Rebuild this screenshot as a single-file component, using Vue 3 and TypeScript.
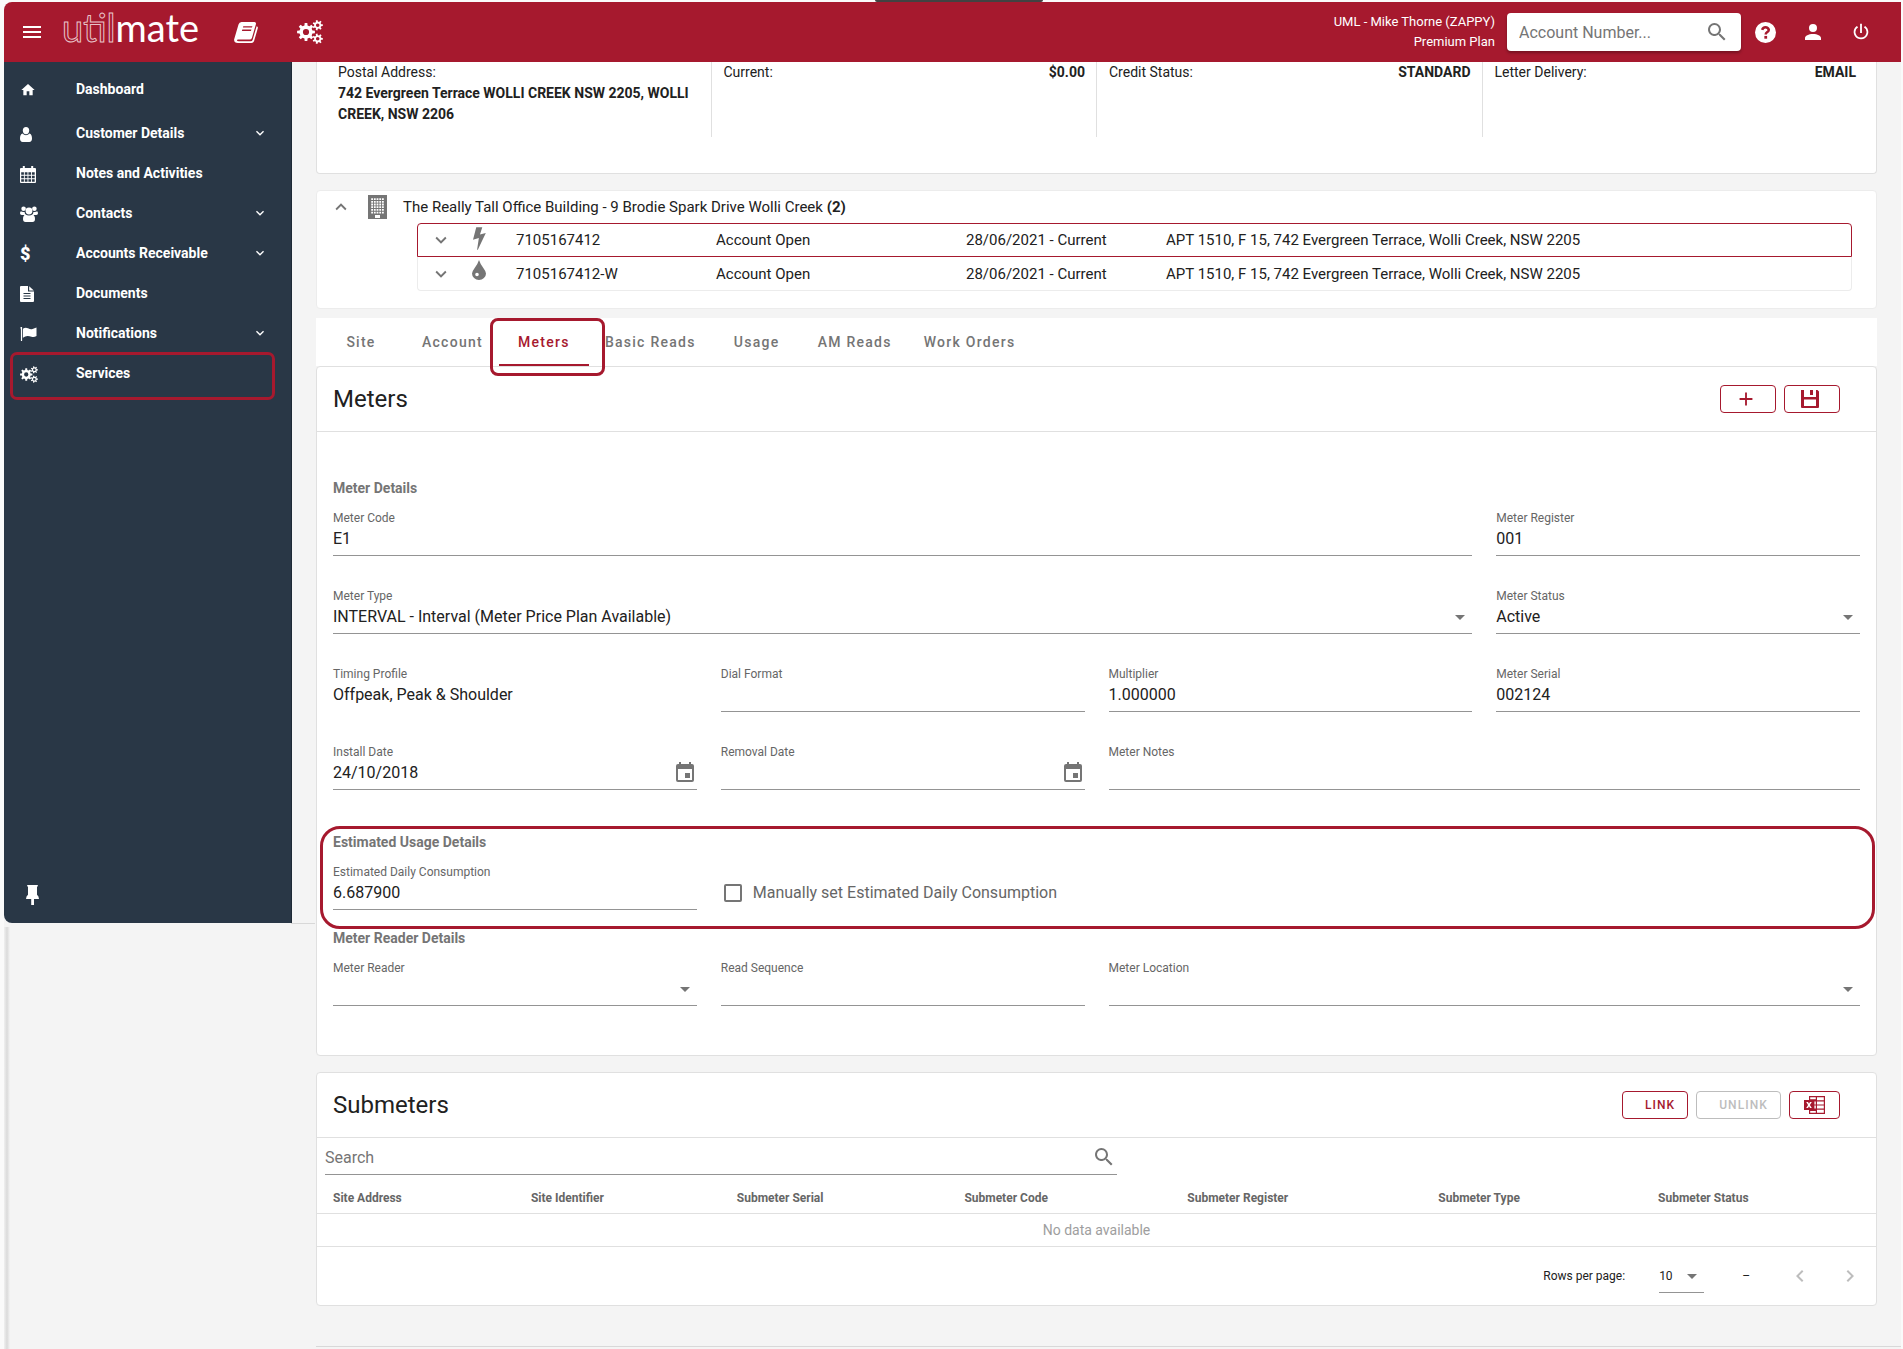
<script setup lang="ts">
import { h, ref } from 'vue'

interface IconShape {
  box: [number, number]
  paths: string[]
}

const circle = (cx: number, cy: number, r: number): string =>
  `M${cx - r} ${cy}a${r} ${r} 0 1 0 ${2 * r} 0a${r} ${r} 0 1 0 ${-2 * r} 0z`

function gear(cx: number, cy: number, outer: number, inner: number, hole: number, teeth: number): string {
  const step = (Math.PI * 2) / teeth
  const points: string[] = []
  for (let i = 0; i < teeth; i++) {
    const a = i * step
    const corners: [number, number][] = [
      [a - step * 0.3, inner],
      [a - step * 0.19, outer],
      [a + step * 0.19, outer],
      [a + step * 0.3, inner],
    ]
    for (const [angle, r] of corners) {
      points.push(`${(cx + Math.cos(angle) * r).toFixed(2)} ${(cy + Math.sin(angle) * r).toFixed(2)}`)
    }
  }
  return `M${points.join('L')}Z${circle(cx, cy, hole)}`
}

function cells(x: number, y: number, cols: number, rows: number, dx: number, dy: number, w: number, hgt: number): string {
  let d = ''
  for (let r = 0; r < rows; r++) {
    for (let c = 0; c < cols; c++) d += `M${x + c * dx} ${y + r * dy}h${w}v${hgt}h${-w}z`
  }
  return d
}

const icons: Record<string, IconShape> = {
  menu: { box: [24, 24], paths: ['M3 6h18v2H3zM3 11h18v2H3zM3 16h18v2H3z'] },
  down: { box: [24, 24], paths: ['M7.41 8.58L12 13.17l4.59-4.59L18 10l-6 6-6-6z'] },
  up: { box: [24, 24], paths: ['M7.41 15.41L12 10.83l4.59 4.58L18 14l-6-6-6 6z'] },
  left: { box: [24, 24], paths: ['M15.41 16.58L10.83 12l4.58-4.59L14 6l-6 6 6 6z'] },
  right: { box: [24, 24], paths: ['M8.59 16.58L13.17 12 8.59 7.41 10 6l6 6-6 6z'] },
  caret: { box: [24, 24], paths: ['M7 10l5 5 5-5z'] },
  plus: { box: [24, 24], paths: ['M19 13h-6v6h-2v-6H5v-2h6V5h2v6h6z'] },
  search: {
    box: [24, 24],
    paths: [
      'M9.5 3A6.5 6.5 0 0 1 16 9.5c0 1.61-.59 3.09-1.56 4.23l.27.27h.79l5 5-1.5 1.5-5-5v-.79l-.27-.27A6.5 6.5 0 1 1 9.5 3m0 2C7 5 5 7 5 9.5S7 14 9.5 14 14 12 14 9.5 12 5 9.5 5z',
    ],
  },
  account: {
    box: [24, 24],
    paths: ['M12 4a4 4 0 1 1 0 8 4 4 0 0 1 0-8m0 10c4.42 0 8 1.79 8 4v2H4v-2c0-2.21 3.58-4 8-4z'],
  },
  power: {
    box: [24, 24],
    paths: [
      'M16.56 5.44l-1.45 1.45A6 6 0 0 1 12 18 6 6 0 0 1 8.88 6.88L7.44 5.44A8 8 0 1 0 20 12c0-2.72-1.36-5.12-3.44-6.56M13 3h-2v10h2z',
    ],
  },
  date: {
    box: [24, 24],
    paths: [
      'M19 19H5V8h14M16 1v2H8V1H6v2H5a2 2 0 0 0-2 2v14a2 2 0 0 0 2 2h14a2 2 0 0 0 2-2V5a2 2 0 0 0-2-2h-1V1M17 12h-5v5h5z',
    ],
  },
  home: { box: [24, 24], paths: ['M10 20v-6h4v6h5v-8h3L12 3 2 12h3v8z'] },
  user: {
    box: [12, 15],
    paths: [
      'M6 0a3.2 3.6 0 1 1 0 7.2A3.2 3.6 0 1 1 6 0z',
      'M2.7 6.6C3.6 7.7 4.7 8.2 6 8.2s2.4-.5 3.3-1.6c2 .3 2.7 2.5 2.7 5 0 2-1 3.4-2.7 3.4H2.7C1 15 0 13.6 0 11.6c0-2.5.7-4.7 2.7-5z',
    ],
  },
  calendar: {
    box: [16, 17],
    paths: [
      'M0 3q0-1 1-1h14q1 0 1 1v13q0 1-1 1H1q-1 0-1-1z' + cells(1.2, 6.2, 4, 3, 3.6, 3.5, 2.7, 2.6),
      'M2.8 0h2v4h-2zM11.2 0h2v4h-2z',
    ],
  },
  users: {
    box: [18, 16],
    paths: [
      circle(3.6, 2.8, 2.3),
      circle(14.4, 2.8, 2.3),
      circle(9, 5, 3.4),
      'M.8 5.2q1.4 1 3.8.7.1 1.8 1.3 3H2Q0 9 0 7.3 0 6 .8 5.2z',
      'M17.2 5.2q-1.4 1-3.8.7-.1 1.8-1.3 3H16q2 .1 2-1.6 0-1.3-.8-2.1z',
      'M5.6 8.5Q7 9.6 9 9.6t3.4-1.1q2.6.6 2.6 4.5 0 3-2.5 3h-7Q3 16 3 13q0-3.9 2.6-4.5z',
    ],
  },
  file: {
    box: [14, 16],
    paths: [
      'M1 0h7v5.5h6V15q0 1-1 1H1q-1 0-1-1V1q0-1 1-1zM3.5 7v1h7V7zM3.5 9.5v1h7v-1zM3.5 12v1h7v-1z',
      'M9.2.2l4.6 4.3H9.2z',
    ],
  },
  flag: {
    box: [16, 14],
    paths: ['M0 0h1.6v14H.4V2.4Q0 2 0 0z', 'M2.4 1.8Q5 0 7.5 1.3T12 2q2-.7 4-1.5v8.5q-2.5 1.7-5 .8T7 9q-2.2 0-4.6 1.7z'],
  },
  cogs: {
    box: [26, 24],
    paths: [gear(9, 12, 9, 6.6, 3.1, 8), gear(20.7, 5.2, 5.2, 3.6, 1.8, 7), gear(20.7, 18.8, 5.2, 3.6, 1.8, 7)],
  },
  book: {
    box: [24, 21],
    paths: [
      'M7.5 0H20.5Q22.4.2 21.9 2.2L17.9 16Q17.3 17.5 15.7 17.5H4.2Q2.9 17.5 2.9 18.3 3.1 19.3 4.8 19.3H16.7Q18.2 19.3 18.7 17.8L22.6 4.2Q24.2 4.6 23.8 6.2L20 19.2Q19.3 21 17.5 21H4Q0 20.8.1 17.5L4.5 2.6Q5.2.2 7.5 0zM9.3 4.2L8.9 5.6H18L18.4 4.2zM8.3 7.6L7.9 9H17L17.4 7.6z',
    ],
  },
  pin: { box: [13, 20], paths: ['M1.2 0h10.6v1.6H11v8.2q1.9 1.4 2 4.2H8v6H5.2v-6H0q.1-2.8 2-4.2V1.6h-.8z'] },
  building: {
    box: [19, 24],
    paths: ['M0 0h19v24H0z' + cells(3.2, 3.2, 5, 6, 2.7, 2.7, 1.8, 1.8) + 'M7 20h5v3H7z'],
  },
  bolt: { box: [14, 24], paths: ['M3.5 0h6.5L7.5 7.8 13.8 6 5.2 24H4.4L6.3 11.5 0 13.3z'] },
  drop: {
    box: [14, 20],
    paths: ['M7 0Q8 3.5 11.5 8.2 14 11.5 14 13.5A7 6.5 0 0 1 0 13.5Q0 11.5 2.5 8.2 6 3.5 7 0z' + circle(5, 14.5, 1.8)],
  },
  save: {
    box: [18, 18],
    paths: ['M0 0h3v7h12V0h1.5L18 1.5V17q0 1-1 1H1q-1 0-1-1zM3 9.5V16h12V9.5z', 'M9 0h3v5H9z'],
  },
  sheet: {
    box: [21, 18],
    paths: [
      'M5 0h16v18H5v-4h5V4H5z' +
        cells(13, 1.2, 1, 4, 0, 4.2, 6.8, 3) +
        cells(10.4, 5.4, 1, 2, 0, 4.2, 1.4, 3) +
        'M6.2 1.2h5.6v2H6.2zM6.2 15h5.6v1.8H6.2z',
      'M0 4h10v10H0zM2.2 6l1.9 3-1.9 3H4l1-1.8L6 12h1.8L5.9 9l1.9-3H6L5 7.8 4 6z',
    ],
  },
}

const Icon = (props: { name: string }) => {
  const icon = icons[props.name]
  return h(
    'svg',
    { viewBox: `0 0 ${icon.box[0]} ${icon.box[1]}`, fill: 'currentColor', 'aria-hidden': 'true' },
    icon.paths.map((d) => h('path', { d, 'fill-rule': 'evenodd' })),
  )
}
Icon.props = ['name']

const menu = [
  { label: 'Dashboard', icon: 'home', more: false },
  { label: 'Customer Details', icon: 'user', more: true },
  { label: 'Notes and Activities', icon: 'calendar', more: false },
  { label: 'Contacts', icon: 'users', more: true },
  { label: 'Accounts Receivable', icon: '', more: true },
  { label: 'Documents', icon: 'file', more: false },
  { label: 'Notifications', icon: 'flag', more: true },
  { label: 'Services', icon: 'cogs', more: false },
]

const services = [
  { icon: 'bolt', id: '7105167412' },
  { icon: 'drop', id: '7105167412-W' },
]

const tabs = ['Site', 'Account', 'Meters', 'Basic Reads', 'Usage', 'AM Reads', 'Work Orders']
const activeTab = ref('Meters')

type Kind = 'text' | 'select' | 'date' | 'plain'
interface Field {
  id: string
  label: string
  value: string
  kind: Kind
  span: number
}
const field = (id: string, label: string, value = '', kind: Kind = 'text', span = 1): Field => ({
  id,
  label,
  value,
  kind,
  span,
})

const sections = ref([
  {
    key: 'details',
    title: 'Meter Details',
    fields: [
      field('code', 'Meter Code', 'E1', 'text', 3),
      field('register', 'Meter Register', '001'),
      field('type', 'Meter Type', 'INTERVAL - Interval (Meter Price Plan Available)', 'select', 3),
      field('status', 'Meter Status', 'Active', 'select'),
      field('profile', 'Timing Profile', 'Offpeak, Peak & Shoulder', 'plain'),
      field('dial', 'Dial Format'),
      field('multiplier', 'Multiplier', '1.000000'),
      field('serial', 'Meter Serial', '002124'),
      field('install', 'Install Date', '24/10/2018', 'date'),
      field('removal', 'Removal Date', '', 'date'),
      field('notes', 'Meter Notes', '', 'text', 2),
    ],
  },
  {
    key: 'usage',
    title: 'Estimated Usage Details',
    fields: [field('daily', 'Estimated Daily Consumption', '6.687900')],
  },
  {
    key: 'reader',
    title: 'Meter Reader Details',
    fields: [
      field('reader', 'Meter Reader', '', 'select'),
      field('sequence', 'Read Sequence'),
      field('location', 'Meter Location', '', 'select', 2),
    ],
  },
])
const manual = ref(false)

const columns = [
  { label: 'Site Address', width: 12.7 },
  { label: 'Site Identifier', width: 13.2 },
  { label: 'Submeter Serial', width: 14.6 },
  { label: 'Submeter Code', width: 14.3 },
  { label: 'Submeter Register', width: 16.1 },
  { label: 'Submeter Type', width: 14.1 },
  { label: 'Submeter Status', width: 15 },
]
</script>

<template>
  <div class="page">
    <header class="topbar">
      <button class="icon-btn" type="button" aria-label="Menu"><Icon name="menu" class="i24" /></button>
      <a class="logo" href="#"><span class="logo-outline">util</span>mate</a>
      <nav class="quick" aria-label="Shortcuts">
        <a class="icon-btn" href="#" aria-label="Guide"><Icon name="book" class="i-book" /></a>
        <a class="icon-btn" href="#" aria-label="Settings"><Icon name="cogs" class="i-cogs" /></a>
      </nav>
      <p class="who">UML - Mike Thorne (ZAPPY)<br />Premium Plan</p>
      <label class="find">
        <input type="text" placeholder="Account Number..." aria-label="Account Number" />
        <Icon name="search" class="i24" />
      </label>
      <button class="icon-btn" type="button" aria-label="Help">
        <svg class="i-help" viewBox="0 0 22 22" aria-hidden="true">
          <circle cx="11" cy="11" r="11" fill="#fff" />
          <path
            d="M7.5 8.2Q8.2 5.5 11 5.5T14.5 8.2Q14.5 9.7 12.5 10.8 11.2 11.6 11.2 13.2"
            fill="none"
            stroke="#a6192e"
            stroke-width="2.6"
          />
          <path d="M9.8 14.6h2.9v2.900H9.8z" fill="#a6192e" />
        </svg>
      </button>
      <button class="icon-btn" type="button" aria-label="Profile"><Icon name="account" class="i24" /></button>
      <button class="icon-btn" type="button" aria-label="Log out"><Icon name="power" class="i22" /></button>
    </header>

    <div class="body">
      <div class="side-col">
        <aside class="sidebar">
          <nav class="menu" aria-label="Main">
            <a v-for="item in menu" :key="item.label" class="menu-item" :class="{ marked: item.label === 'Services' }" href="#">
              <span class="menu-icon">
                <Icon v-if="item.icon" :name="item.icon" :class="'m-' + item.icon" />
                <b v-else class="dollar">$</b>
              </span>
              <span class="menu-label">{{ item.label }}</span>
              <Icon v-if="item.more" name="down" class="i16" />
            </a>
          </nav>
          <button class="pin" type="button" aria-label="Pin menu"><Icon name="pin" class="i-pin" /></button>
        </aside>
        <div class="rail"></div>
      </div>

      <main class="content">
        <section class="card summary">
          <div class="sum-col stack">
            <span>Postal Address:</span>
            <b>742 Evergreen Terrace WOLLI CREEK NSW 2205, WOLLI CREEK, NSW 2206</b>
          </div>
          <div class="sum-col"><span>Current:</span><b>$0.00</b></div>
          <div class="sum-col"><span>Credit Status:</span><b>STANDARD</b></div>
          <div class="sum-col"><span>Letter Delivery:</span><b>EMAIL</b></div>
        </section>

        <section class="card sites">
          <div class="site-head">
            <button class="row-toggle" type="button" aria-label="Collapse site"><Icon name="up" class="i22" /></button>
            <Icon name="building" class="i-building" />
            <span>The Really Tall Office Building - 9 Brodie Spark Drive Wolli Creek <b>(2)</b></span>
          </div>
          <div v-for="(s, i) in services" :key="s.id" class="service" :class="{ current: i === 0 }">
            <button class="row-toggle" type="button" aria-label="Expand service"><Icon name="down" class="i22" /></button>
            <span class="service-icon"><Icon :name="s.icon" :class="'s-' + s.icon" /></span>
            <span>{{ s.id }}</span>
            <span>Account Open</span>
            <span>28/06/2021 - Current</span>
            <span>APT 1510, F 15, 742 Evergreen Terrace, Wolli Creek, NSW 2205</span>
          </div>
        </section>

        <div class="tabs" role="tablist">
          <button
            v-for="t in tabs"
            :key="t"
            class="tab"
            :class="{ active: t === activeTab }"
            type="button"
            role="tab"
            :aria-selected="t === activeTab"
            @click="activeTab = t"
          >
            {{ t }}
          </button>
        </div>

        <section class="card meters">
          <header class="card-head">
            <h2>Meters</h2>
            <button class="btn square" type="button" aria-label="Add meter"><Icon name="plus" class="i22" /></button>
            <button class="btn square" type="button" aria-label="Save"><Icon name="save" class="i18" /></button>
          </header>
          <form class="form" @submit.prevent>
            <fieldset v-for="s in sections" :key="s.key" :class="s.key">
              <legend>{{ s.title }}</legend>
              <div class="grid">
                <div v-for="f in s.fields" :key="f.id" class="field" :class="[f.kind, 'span' + f.span]">
                  <label :for="f.id">{{ f.label }}</label>
                  <div class="control">
                    <select v-if="f.kind === 'select'" :id="f.id" v-model="f.value">
                      <option :value="f.value">{{ f.value }}</option>
                    </select>
                    <input v-else :id="f.id" v-model="f.value" type="text" :readonly="f.kind === 'plain'" />
                    <Icon v-if="f.kind === 'select'" name="caret" class="i24 caret" />
                    <button v-if="f.kind === 'date'" class="pick" type="button" :aria-label="'Pick ' + f.label">
                      <Icon name="date" class="i24" />
                    </button>
                  </div>
                </div>
                <label v-if="s.key === 'usage'" class="check">
                  <input v-model="manual" type="checkbox" />
                  Manually set Estimated Daily Consumption
                </label>
              </div>
            </fieldset>
          </form>
        </section>

        <section class="card submeters">
          <header class="card-head">
            <h2>Submeters</h2>
            <button class="btn text" type="button">LINK</button>
            <button class="btn text" type="button" disabled>UNLINK</button>
            <button class="btn sheet" type="button" aria-label="Export"><Icon name="sheet" class="i-sheet" /></button>
          </header>
          <label class="table-search">
            <input type="text" placeholder="Search" aria-label="Search submeters" />
            <Icon name="search" class="i24" />
          </label>
          <table>
            <thead>
              <tr>
                <th v-for="c in columns" :key="c.label" :style="{ width: c.width + '%' }">{{ c.label }}</th>
              </tr>
            </thead>
            <tbody>
              <tr>
                <td :colspan="columns.length">No data available</td>
              </tr>
            </tbody>
          </table>
          <footer class="pager">
            <label for="rows">Rows per page:</label>
            <div class="control rows">
              <select id="rows">
                <option>10</option>
              </select>
              <Icon name="caret" class="i24 caret" />
            </div>
            <span class="range">–</span>
            <button type="button" disabled aria-label="Previous page"><Icon name="left" class="i24" /></button>
            <button type="button" disabled aria-label="Next page"><Icon name="right" class="i24" /></button>
          </footer>
        </section>
        <div class="page-end"></div>
      </main>
    </div>
  </div>
</template>

<style>
body {
  margin: 0;
  background: #fafafa;
}
</style>

<style scoped>
.page {
  position: relative;
  padding: 2px 2px 0 4px;
  font-family: Roboto, 'Liberation Sans', sans-serif;
  font-size: 14px;
  color: #212121;
}
.page::before {
  content: '';
  position: absolute;
  top: 0;
  left: 46%;
  width: 168px;
  height: 2px;
  background: #424242;
  border-radius: 0 0 4px 4px;
}
.page *,
.page *::before,
.page *::after {
  box-sizing: border-box;
}
button,
input,
select {
  font: inherit;
  color: inherit;
  background: none;
  border: 0;
  padding: 0;
  margin: 0;
  outline: 0;
  border-radius: 0;
}
svg {
  display: block;
  flex: none;
}
a {
  color: inherit;
  text-decoration: none;
}
.i16 { width: 16px; height: 16px; }
.i18 { width: 18px; height: 18px; }
.i22 { width: 22px; height: 22px; }
.i24 { width: 24px; height: 24px; }
.i-book { width: 24px; height: 21px; }
.i-cogs { width: 26px; height: 24px; }
.i-help { width: 21px; height: 21px; }
.i-pin { width: 13px; height: 20px; }
.i-building { width: 19px; height: 24px; color: #757575; }
.i-sheet { width: 21px; height: 18px; }

.topbar {
  display: flex;
  align-items: center;
  height: 60px;
  padding: 0 16px 0 4px;
  background: #a6192e;
  color: #fff;
  border-top-left-radius: 8px;
}
.icon-btn {
  display: flex;
  align-items: center;
  justify-content: center;
  width: 48px;
  height: 48px;
  flex: none;
}
.logo {
  width: 136px;
  margin-left: 6px;
  padding-bottom: 10px;
  font: 400 38px/44px Lato, sans-serif;
  white-space: nowrap;
}
.logo-outline {
  color: #a6192e;
  -webkit-text-stroke: 1px #e9c3c9;
}
.quick {
  display: flex;
  gap: 16px;
  margin-left: 24px;
}
.who {
  margin: 0 12px 0 auto;
  font-size: 13px;
  line-height: 20px;
  text-align: right;
}
.find {
  display: flex;
  align-items: center;
  width: 234px;
  height: 38px;
  padding: 0 12px;
  background: #fff;
  color: #757575;
  border-radius: 4px;
  box-shadow: 0 2px 3px rgba(0, 0, 0, 0.3);
  font-size: 16px;
}
.find input {
  flex: 1;
  min-width: 0;
}
input::placeholder {
  color: #757575;
  opacity: 1;
}

.body {
  display: flex;
  background: #f4f4f4;
}
.side-col {
  display: flex;
  flex-direction: column;
  flex: none;
  width: 288px;
}
.sidebar {
  position: relative;
  display: flex;
  flex-direction: column;
  justify-content: space-between;
  min-height: 861px;
  background: #293746;
  color: #fff;
  border-right: 1px solid #1d2935;
  border-bottom-left-radius: 8px;
}
.sidebar::after {
  content: '';
  position: absolute;
  left: 100%;
  bottom: -1px;
  width: 24px;
  border-bottom: 1px solid #d8d8d8;
}
.menu {
  padding-top: 7px;
}
.menu-item {
  position: relative;
  display: flex;
  align-items: center;
  height: 40px;
  padding: 0 23px 0 16px;
  font-weight: 700;
}
.menu-item:first-child {
  margin-bottom: 4px;
}
.menu-icon {
  width: 56px;
  padding-top: 2px;
}
.menu-label {
  flex: 1;
}
.marked::after {
  content: '';
  position: absolute;
  inset: -1px 16px -7px 6px;
  border: 3px solid #a6192e;
  border-radius: 7px;
}
.dollar {
  font-size: 18px;
  line-height: 20px;
}
.m-home { width: 16px; height: 16px; }
.m-user { width: 12px; height: 15px; }
.m-calendar { width: 16px; height: 17px; }
.m-users { width: 18px; height: 16px; }
.m-file { width: 14px; height: 16px; }
.m-flag { width: 17px; height: 14px; }
.m-cogs { width: 18px; height: 17px; }
.pin {
  align-self: flex-start;
  margin: 0 0 18px 22px;
}
.rail {
  flex: 1;
  margin-top: 4px;
  background: linear-gradient(90deg, #f0f0f0, #dadada 3px, #f4f4f4 6px);
}

.content {
  flex: 1;
  min-width: 0;
  padding-left: 24px;
}
.card {
  margin-right: 24px;
  background: #fff;
  border: 1px solid #e0e0e0;
  border-radius: 4px;
}
.summary {
  display: flex;
  height: 112px;
  padding: 0 9px 36px;
  border-top: 0;
  border-radius: 0 0 4px 4px;
  line-height: 21px;
}
.sum-col {
  display: flex;
  justify-content: space-between;
  flex: 1;
  padding: 0 11px 0 12px;
  border-right: 1px solid #e0e0e0;
}
.sum-col:last-child {
  border-right: 0;
}
.stack {
  flex-direction: column;
  justify-content: flex-start;
}
.sites {
  margin-top: 16px;
  padding-bottom: 17px;
  border-color: #ececec;
  font-size: 15px;
}
.site-head {
  display: flex;
  align-items: center;
  height: 32px;
}
.site-head .i-building {
  margin: 0 16px 0 3px;
}
.row-toggle {
  display: flex;
  justify-content: center;
  width: 48px;
  color: #757575;
}
.service {
  display: grid;
  grid-template-columns: 46px 52px 200px 250px 200px 1fr;
  align-items: center;
  height: 34px;
  margin: 0 24px 0 100px;
  border: 1px solid #ececec;
  border-top: 0;
  border-radius: 0 0 4px 4px;
}
.service .row-toggle {
  width: 46px;
}
.service.current {
  border: 1px solid #a6192e;
  border-radius: 4px 4px 0 0;
}
.service-icon {
  display: flex;
  justify-content: center;
  align-self: start;
  width: 30px;
  padding-top: 3px;
  color: #757575;
}
.s-bolt { width: 13px; height: 23px; }
.s-drop { width: 14px; height: 20px; }

.tabs {
  display: flex;
  height: 48px;
  margin: 9px 24px 0 0;
  background: #fff;
}
.tab {
  position: relative;
  min-width: 90px;
  padding: 0 16px;
  font-weight: 500;
  letter-spacing: 0.09em;
  color: #757575;
}
.tab.active {
  color: #a6192e;
}
.tab.active::before {
  content: '';
  position: absolute;
  inset: auto 0 0;
  height: 2px;
  background: #a6192e;
}
.tab.active::after {
  content: '';
  position: absolute;
  inset: 0 -16px -10px -9px;
  border: 3px solid #a6192e;
  border-radius: 8px;
}

.card-head {
  display: flex;
  align-items: center;
  gap: 8px;
  height: 65px;
  padding: 0 36px 0 16px;
  border-bottom: 1px solid #e0e0e0;
}
h2 {
  flex: 1;
  margin: 0;
  font-size: 24px;
  line-height: 32px;
  font-weight: 400;
}
.btn {
  display: flex;
  align-items: center;
  height: 28px;
  border: 1px solid #a6192e;
  border-radius: 4px;
  color: #a6192e;
  font-size: 12px;
  font-weight: 500;
  letter-spacing: 0.09em;
}
.btn.square {
  justify-content: center;
  width: 56px;
  padding-right: 5px;
}
.btn.text {
  padding: 0 12px 0 22px;
}
.btn.sheet {
  padding: 0 14px;
}
.btn:disabled {
  border-color: #bdbdbd;
  color: #bdbdbd;
}

.form {
  padding: 46px 16px 49px;
}
fieldset {
  position: relative;
  min-width: 0;
  margin: 0;
  padding: 0;
  border: 0;
}
fieldset.usage {
  margin: 42px 0 18px;
}
fieldset.usage::after {
  content: '';
  position: absolute;
  inset: -38px -15px -19px -13px;
  border: 3px solid #a6192e;
  border-radius: 20px;
  pointer-events: none;
}
legend {
  padding: 0 0 12px;
  font-weight: 700;
  line-height: 20px;
  color: #757575;
}
.grid {
  display: grid;
  grid-template-columns: repeat(4, minmax(0, 1fr));
  gap: 32px 24px;
}
.span2 { grid-column: span 2; }
.span3 { grid-column: span 3; }
.field label {
  display: block;
  font-size: 12px;
  line-height: 16px;
  color: #666;
}
.control {
  position: relative;
  display: flex;
  height: 30px;
  padding-top: 1px;
  border-bottom: 1px solid #949494;
}
.plain .control {
  border-bottom-color: transparent;
}
.control input,
.control select {
  flex: 1;
  min-width: 0;
  height: 24px;
  font-size: 16px;
  line-height: 24px;
  appearance: none;
}
.caret {
  position: absolute;
  right: 0;
  top: 1px;
  color: #757575;
  pointer-events: none;
}
.pick {
  align-self: flex-start;
  color: #757575;
}
.check {
  grid-column: span 2;
  display: flex;
  align-items: center;
  align-self: start;
  gap: 11px;
  padding: 17px 0 0 3px;
  font-size: 16px;
  line-height: 24px;
  color: #666;
}
.check input {
  width: 18px;
  height: 18px;
  appearance: none;
  border: 2px solid #757575;
  border-radius: 2px;
}
.check input:checked {
  background: #a6192e;
}

.submeters {
  margin-top: 16px;
}
.table-search {
  display: flex;
  align-items: center;
  width: calc(50% + 12px);
  height: 37px;
  margin-left: 8px;
  padding: 2px 1px 0 0;
  border-bottom: 1px solid #949494;
  color: #757575;
  font-size: 16px;
}
.table-search input {
  flex: 1;
  min-width: 0;
}
table {
  width: 100%;
  border-collapse: collapse;
  table-layout: fixed;
}
th {
  padding: 14px 16px 6px;
  border-bottom: 1px solid #e0e0e0;
  font-size: 12px;
  line-height: 18px;
  font-weight: 700;
  text-align: left;
  color: #666;
}
td {
  height: 33px;
  padding: 0;
  border-bottom: 1px solid #e0e0e0;
  text-align: center;
  color: #9e9e9e;
}
.pager {
  display: flex;
  align-items: center;
  justify-content: flex-end;
  height: 58px;
  padding-right: 8px;
  font-size: 12px;
}
.pager .rows {
  width: 45px;
  height: 33px;
  margin: 0 38px 0 34px;
  align-items: center;
  padding: 0;
}
.pager select {
  font-size: 12px;
}
.pager .caret {
  top: 4px;
}
.range {
  margin-right: 32px;
}
.pager button {
  display: flex;
  justify-content: center;
  width: 36px;
  color: #bdbdbd;
}
.pager button + button {
  margin-left: 14px;
}
.page-end {
  height: 4px;
  margin-top: 40px;
  border-top: 1px solid #d8d8d8;
}
</style>
